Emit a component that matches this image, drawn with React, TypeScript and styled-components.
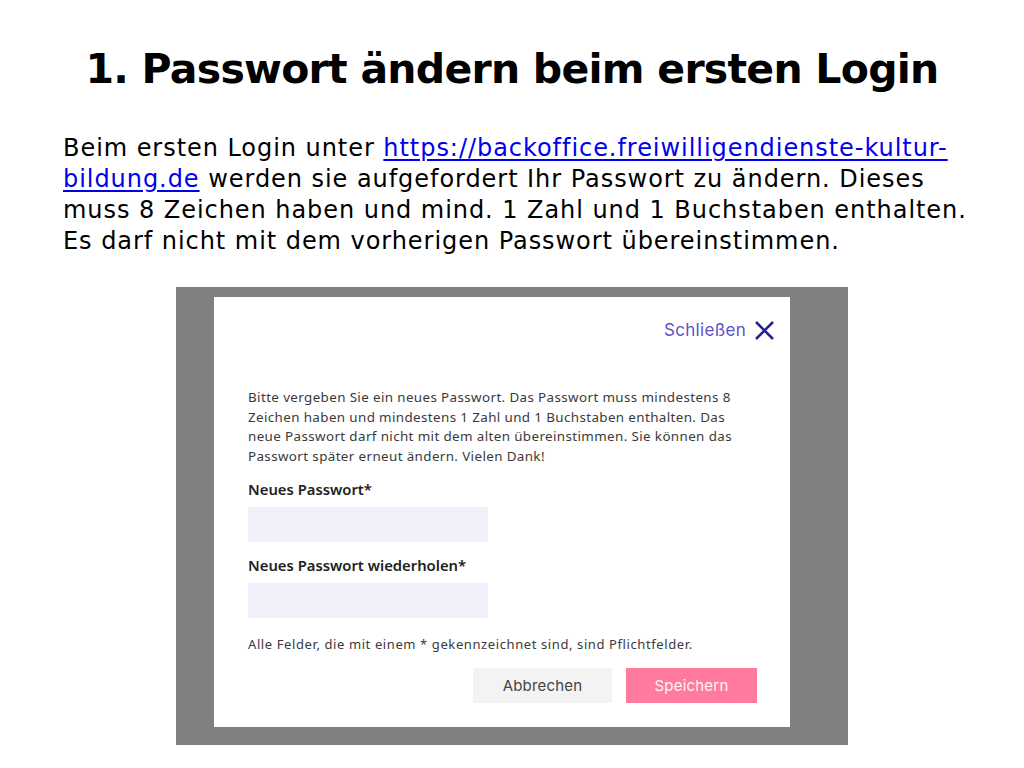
import React from 'react';
import styled, { createGlobalStyle } from 'styled-components';

const GlobalStyle = createGlobalStyle`
  html, body {
    margin: 0;
    padding: 0;
    background: #ffffff;
  }
  body {
    font-family: 'DejaVu Sans', Verdana, sans-serif;
  }
`;

const Slide = styled.div`
  width: 1024px;
  height: 768px;
  display: flex;
  flex-direction: column;
  align-items: flex-start;
  box-sizing: border-box;
  padding-top: 45px;
  overflow: hidden;
`;

const Title = styled.h1`
  width: 100%;
  margin: 0;
  text-align: center;
  font-family: 'DejaVu Sans', Verdana, sans-serif;
  font-weight: bold;
  font-size: 41px;
  line-height: 48px;
  letter-spacing: -0.75px;
  color: #000;
`;

const Intro = styled.p`
  margin: 40px 0 0 63px;
  width: 915px;
  font-family: 'DejaVu Sans', Verdana, sans-serif;
  font-size: 24px;
  line-height: 31px;
  letter-spacing: 0.95px;
  color: #000;

  a {
    color: #0000ee;
    text-decoration: underline;
    text-underline-offset: 3px;
  }
`;

const Screenshot = styled.div`
  margin: 30px 0 0 176px;
  width: 672px;
  height: 458px;
  box-sizing: border-box;
  padding: 10px 58px 18px 38px;
  background: #808080;
`;

const Dialog = styled.div`
  width: 576px;
  height: 430px;
  box-sizing: border-box;
  background: #ffffff;
  display: flex;
  flex-direction: column;
  padding: 22px 15px 0 34px;
  font-family: 'Noto Sans', 'Open Sans', sans-serif;
`;

const CloseRow = styled.div`
  display: flex;
  justify-content: flex-end;
  align-items: center;
  gap: 8px;
  height: 22px;
`;

const CloseText = styled.span`
  font-family: Inter, 'Noto Sans', sans-serif;
  font-size: 17px;
  letter-spacing: 0.3px;
  color: #5b52c8;
`;

const Notice = styled.p`
  margin: 47px 0 0 0;
  width: 530px;
  font-size: 13.4px;
  letter-spacing: 0.38px;
  line-height: 19.5px;
  color: #3a3a3a;
`;

const Label = styled.div`
  margin-top: 14px;
  font-size: 14.8px;
  font-weight: 600;
  color: #222;
  line-height: 18px;
`;

const Field = styled.div`
  margin-top: 9px;
  width: 240px;
  height: 35px;
  background: #f0f1fa;
`;

const Footnote = styled.p`
  margin: 17px 0 0 0;
  font-size: 13px;
  letter-spacing: 0.6px;
  color: #3a3a3a;
  line-height: 18px;
`;

const Actions = styled.div`
  display: flex;
  justify-content: flex-end;
  gap: 14px;
  margin-top: 15px;
  padding-right: 18px;
`;

const Button = styled.div<{ primary?: boolean }>`
  width: ${({ primary }) => (primary ? '131px' : '139px')};
  height: 35px;
  display: flex;
  align-items: center;
  justify-content: center;
  font-family: Inter, 'Noto Sans', sans-serif;
  font-size: 15px;
  letter-spacing: 0.2px;
  background: ${({ primary }) => (primary ? '#ff7a9c' : '#f3f3f3')};
  color: ${({ primary }) => (primary ? '#fff4f7' : '#444')};
`;

function CloseIcon() {
  return (
    <svg width="21" height="21" viewBox="0 0 21 21">
      <path
        d="M2 2 L19 19 M19 2 L2 19"
        stroke="#23219a"
        strokeWidth="2.6"
        fill="none"
      />
    </svg>
  );
}

function App() {
  return (
    <>
      <GlobalStyle />
      <Slide>
        <Title>1. Passwort ändern beim ersten Login</Title>
        <Intro>
          Beim ersten Login unter{' '}
          <a href="#link">https://backoffice.freiwilligendienste-kultur-bildung.de</a>{' '}
          werden sie aufgefordert Ihr Passwort zu ändern. Dieses muss 8 Zeichen
          haben und mind. 1 Zahl und 1 Buchstaben enthalten. Es darf nicht mit
          dem vorherigen Passwort übereinstimmen.
        </Intro>
        <Screenshot>
          <Dialog>
            <CloseRow>
              <CloseText>Schließen</CloseText>
              <CloseIcon />
            </CloseRow>
            <Notice>
              Bitte vergeben Sie ein neues Passwort. Das Passwort muss mindestens 8
              <br />
              Zeichen haben und mindestens 1 Zahl und 1 Buchstaben enthalten. Das
              <br />
              neue Passwort darf nicht mit dem alten übereinstimmen. Sie können das
              <br />
              Passwort später erneut ändern. Vielen Dank!
            </Notice>
            <Label>Neues Passwort*</Label>
            <Field />
            <Label>Neues Passwort wiederholen*</Label>
            <Field />
            <Footnote>
              Alle Felder, die mit einem * gekennzeichnet sind, sind Pflichtfelder.
            </Footnote>
            <Actions>
              <Button>Abbrechen</Button>
              <Button primary>Speichern</Button>
            </Actions>
          </Dialog>
        </Screenshot>
      </Slide>
    </>
  );
}

export default App;
